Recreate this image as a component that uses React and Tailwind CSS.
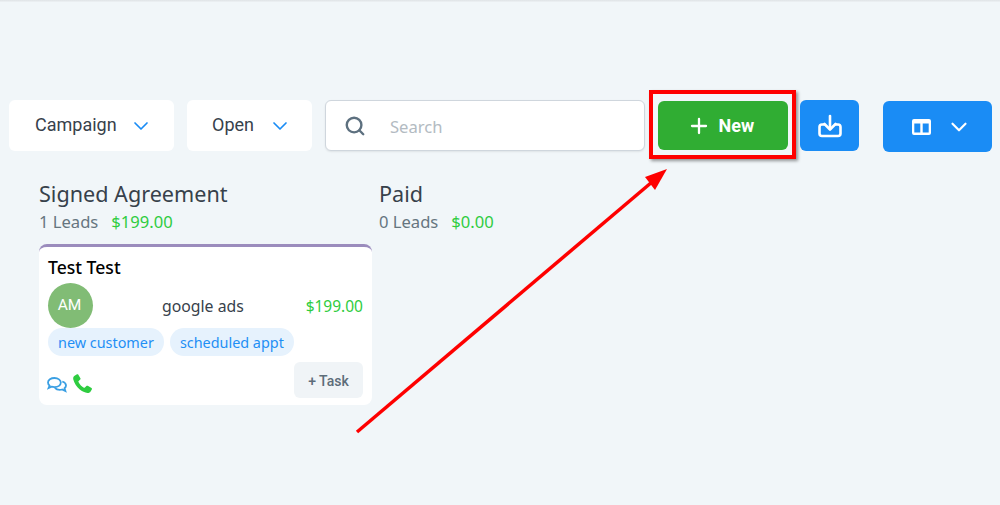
import React from "react";
import { ChevronDown, Search, Plus } from "lucide-react";

const roboto = "font-['Roboto',sans-serif]";
const noto = "font-['Noto_Sans',sans-serif]";

function Select({ label, width, pad }) {
  return (
    <div className={`flex h-[51px] items-center rounded-md bg-white ${width} ${pad} ${roboto} text-[18px] text-[#37414b]`}>
      <span className="-mt-[2px]">{label}</span>
      <ChevronDown size={24} strokeWidth={1.7} className="ml-auto text-[#1a8cf5]" />
    </div>
  );
}

function Column({ title, leads, amount, width, children }) {
  return (
    <div className={`flex shrink-0 flex-col ${width}`}>
      <div className={`${noto} text-[21.6px] leading-[28px] text-[#37414b]`}>{title}</div>
      <div className={`${noto} mt-[1px] flex gap-[13px] text-[16.6px] leading-[26px]`}>
        <span className="text-[#66757f]">{leads}</span>
        <span className="text-[#2ecc40]">{amount}</span>
      </div>
      {children}
    </div>
  );
}

export default function App() {
  return (
    <div className="relative h-[505px] w-[1000px] overflow-hidden bg-[#f1f6f9]">
      <div className="h-[2px] bg-gradient-to-b from-[#dfe3e6] to-[#eef2f5]" />
      <div className="flex items-start pl-[9px] pt-[98px]">
        <Select label="Campaign" width="w-[165px]" pad="pl-[26px] pr-[21px]" />
        <div className="w-[13px]" />
        <Select label="Open" width="w-[125px]" pad="pl-[25px] pr-[20px]" />
        <div className="ml-[13px] flex h-[51px] w-[320px] items-center rounded-md border border-[#cfd6dd] bg-white pl-[18px] shadow-[0_1px_2px_rgba(0,0,0,0.08)]">
          <Search size={22} strokeWidth={2.6} className="text-[#5d707f]" />
          <span className={`${noto} ml-[24px] mt-[3px] text-[16.6px] text-[#b3bbc2]`}>Search</span>
        </div>
        <div className="ml-[4px] -mt-[10px] -mb-[10px] flex h-[69px] w-[147px] items-start justify-center border-[4px] border-[#fe0000] pt-[7px] shadow-[2px_2px_3px_rgba(0,0,0,0.4)]">
          <div className={`flex h-[49px] w-[130px] items-center rounded-md bg-[#30ad33] pl-[29px] ${roboto} text-[18px] font-bold text-white`}>
            <Plus size={24} strokeWidth={2.3} />
            <span className="ml-[8px]">New</span>
          </div>
        </div>
        <div className="ml-[4px] flex h-[51px] w-[59px] items-center justify-center rounded-md bg-[#1a8cf5] text-white">
          <svg width="24" height="24" viewBox="0 0 24 24" fill="none" stroke="currentColor" strokeWidth="2.600" strokeLinecap="round" strokeLinejoin="round">
            <path d="M12 2v13" />
            <path d="M6.500 10 12 15.500l5.500-5.500" />
            <path d="M6 10.500H4A2.500 2.500 0 0 0 1.500 13v6.500A2.500 2.500 0 0 0 4 22h16a2.500 2.500 0 0 0 2.500-2.500V13a2.500 2.500 0 0 0-2.500-2.500h-2" />
          </svg>
        </div>
        <div className="mt-[1px] ml-[24px] flex h-[51px] w-[109px] items-center rounded-md bg-[#1a8cf5] pl-[29px] text-white">
          <svg width="19" height="16" viewBox="0 0 19 16" fill="currentColor" fillRule="evenodd">
            <path d="M2 0h15a2 2 0 0 1 2 2v12a2 2 0 0 1-2 2H2a2 2 0 0 1-2-2V2a2 2 0 0 1 2-2zM2.300 4.500h6v9h-6zM10.700 4.500h6v9h-6z" />
          </svg>
          <ChevronDown size={26} strokeWidth={2} className="ml-[15px]" />
        </div>
      </div>

      <div className="flex pl-[39px] pt-[28px]">
        <Column title="Signed Agreement" leads="1 Leads" amount="$199.00" width="w-[340px]">
          <div className="mt-[9px] h-[161px] w-[333px] rounded-lg border-t-[3px] border-[#9b8cbd] bg-white pl-[9px] pr-[9px]">
            <div className={`${noto} pt-[7px] text-[17.6px] font-medium leading-[26px] text-black`}>Test Test</div>
            <div className={`mt-[3px] flex h-[45px] items-center ${noto} text-[15.8px]`}>
              <div className={`flex h-[45px] w-[45px] items-center justify-center rounded-full bg-[#81bc75] pr-[2px] ${roboto} text-[15.5px] text-white`}>AM</div>
              <span className="ml-[69px] pt-[2px] text-[#37414b]">google ads</span>
              <span className="ml-auto pt-[2px] text-[15.5px] text-[#2ecc40]">$199.00</span>
            </div>
            <div className={`flex gap-[6px] ${noto} text-[14.4px]`}>
              <span className="flex h-[28px] items-center rounded-full bg-[#e6f2fd] px-[10px] pt-[2px] text-[#1f8ff5]">new customer</span>
              <span className="flex h-[28px] items-center rounded-full bg-[#e6f2fd] px-[10px] pt-[2px] text-[#1f8ff5]">scheduled appt</span>
            </div>
            <div className="mt-[6px] flex items-center">
              <svg width="20" height="16" viewBox="0 0 20 16" fill="none" stroke="#3a9fe3" strokeWidth="1.8" className="-ml-[1px] mt-[9px]">
                <path d="M7.500 1C3.900 1 1 3 1 5.600c0 1.200.6 2.200 1.600 3L1.600 11l3-1.300c.9.3 1.900.4 2.900.4 3.600 0 6.300-2 6.300-4.500S11.100 1 7.500 1z" />
                <path d="M15.300 4.500c2.200.7 3.700 2.200 3.700 3.900 0 1.100-.6 2.100-1.500 2.800l.9 2.800-3.300-1.500c-.8.200-1.500.3-2.300.3-2.100 0-3.900-.8-4.900-2" />
              </svg>
              <svg width="19" height="19" viewBox="0 0 19 19" className="ml-[6px] mt-[7px]" fill="#2ecc40">
                <path d="M4 .3 1.200 2C.2 2.800 0 4 .3 5.400c1 3.900 3.500 7.500 6.200 9.800 2.600 2.200 5.400 3.500 8 3.700 1.300.1 2.500-.5 3.100-1.500l1.200-2c.3-.5.1-1-.3-1.300l-3.700-2.300c-.5-.3-1-.2-1.400.2l-1.500 1.600c-.3.3-.7.3-1 .2-1.900-.9-4.300-3.300-5.400-5.700-.2-.3-.1-.7.2-1l1.500-1.500c.4-.4.5-.9.2-1.400L5.200.6C4.900.1 4.400 0 4 .3z" />
              </svg>
              <div className={`ml-auto flex h-[36px] w-[69px] items-center justify-center rounded-md bg-[#f0f4f7] pt-[2px] ${roboto} text-[14px] font-medium text-[#5d6d7a]`}>+ Task</div>
            </div>
          </div>
        </Column>
        <Column title="Paid" leads="0 Leads" amount="$0.00" width="w-[340px]" />
      </div>

      <svg className="absolute left-0 top-0" width="1000" height="505" viewBox="0 0 1000 505" fill="none">
        <line x1="357" y1="432" x2="652" y2="182" stroke="#fe0000" strokeWidth="3.500" />
        <polygon points="667,169 655,190 645,177" fill="#fe0000" />
      </svg>
    </div>
  );
}
